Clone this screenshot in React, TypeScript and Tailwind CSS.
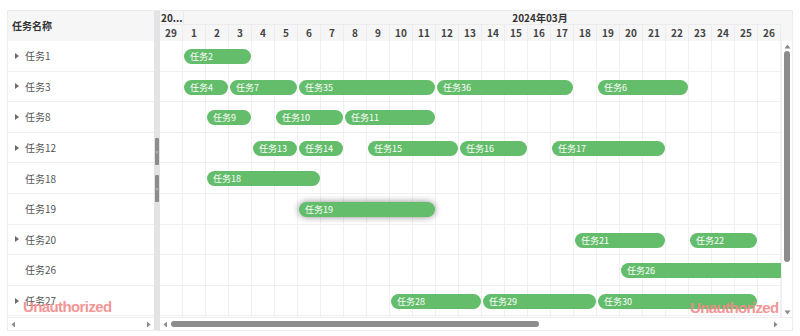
import React from "react";

type Bar = { name: string; start: number; span: number; selected?: boolean };
type Row = { name: string; caret: boolean; bars: Bar[] };

const rows: Row[] = [
  { name: "任务1", caret: true, bars: [{ name: "任务2", start: 1, span: 3 }] },
  {
    name: "任务3",
    caret: true,
    bars: [
      { name: "任务4", start: 1, span: 2 },
      { name: "任务7", start: 3, span: 3 },
      { name: "任务35", start: 6, span: 6 },
      { name: "任务36", start: 12, span: 6 },
      { name: "任务6", start: 19, span: 4 },
    ],
  },
  {
    name: "任务8",
    caret: true,
    bars: [
      { name: "任务9", start: 2, span: 2 },
      { name: "任务10", start: 5, span: 3 },
      { name: "任务11", start: 8, span: 4 },
    ],
  },
  {
    name: "任务12",
    caret: true,
    bars: [
      { name: "任务13", start: 4, span: 2 },
      { name: "任务14", start: 6, span: 2 },
      { name: "任务15", start: 9, span: 4 },
      { name: "任务16", start: 13, span: 3 },
      { name: "任务17", start: 17, span: 5 },
    ],
  },
  { name: "任务18", caret: false, bars: [{ name: "任务18", start: 2, span: 5 }] },
  { name: "任务19", caret: false, bars: [{ name: "任务19", start: 6, span: 6, selected: true }] },
  {
    name: "任务20",
    caret: true,
    bars: [
      { name: "任务21", start: 18, span: 4 },
      { name: "任务22", start: 23, span: 3 },
    ],
  },
  { name: "任务26", caret: false, bars: [{ name: "任务26", start: 20, span: 9 }] },
  {
    name: "任务27",
    caret: true,
    bars: [
      { name: "任务28", start: 10, span: 4 },
      { name: "任务29", start: 14, span: 5 },
      { name: "任务30", start: 19, span: 7 },
    ],
  },
];

const days = [29, ...Array.from({ length: 26 }, (_, i) => i + 1)];
const COL = 23;

const Caret = () => (
  <svg width="6" height="8" viewBox="0 0 6 8" className="shrink-0">
    <path d="M1 1 L5 4 L1 7 Z" fill="#6b6b6b" />
  </svg>
);

export default function App() {
  return (
    <div
      className="w-[800px] h-[336px] bg-white pt-[10px] pl-[7px] relative overflow-hidden"
      style={{ fontFamily: '"Noto Sans CJK SC", "Noto Sans", sans-serif' }}
    >
      <div className="w-[786px] h-[321px] border border-[#ececee] flex overflow-hidden">
        {/* Left panel */}
        <div className="w-[146px] flex flex-col shrink-0">
          <div className="h-[30px] bg-[#f6f6f7] flex items-center pl-[4px] pb-[2px] text-[10px] font-bold text-[#333] shrink-0">
            任务名称
          </div>
          <div className="flex-1 overflow-hidden">
            {rows.map((r) => (
              <div
                key={r.name}
                className="h-[30.6px] border-b border-[#efeff1] flex items-center pl-[6px] gap-[5px] text-[10px] text-[#555]"
              >
                {r.caret ? <Caret /> : <span className="w-[6px] shrink-0" />}
                <span>{r.name}</span>
              </div>
            ))}
          </div>
          <div className="h-[13px] shrink-0 border-t border-[#efeff1] flex items-center justify-between px-[3px] bg-white">
            <svg width="5" height="7" viewBox="0 0 5 7">
              <path d="M4 0.5 L0.5 3.5 L4 6.5 Z" fill="#8a8a8a" />
            </svg>
            <svg width="5" height="7" viewBox="0 0 5 7">
              <path d="M1 0.5 L4.5 3.5 L1 6.5 Z" fill="#8a8a8a" />
            </svg>
          </div>
        </div>

        {/* Splitter */}
        <div className="w-[6px] shrink-0 bg-[#e3e3e5] flex flex-col items-center pt-[127px] gap-[10px]">
          <div className="w-[4px] h-[27px] rounded-[1px] bg-[#8c8c8c] flex items-center justify-center text-[6px] leading-none text-white">
            ‹
          </div>
          <div className="w-[4px] h-[27px] rounded-[1px] bg-[#8c8c8c] flex items-center justify-center text-[6px] leading-none text-white">
            ›
          </div>
        </div>

        {/* Timeline */}
        <div className="flex-1 flex flex-col overflow-hidden">
          {/* Header */}
          <div className="h-[30px] bg-[#f6f6f7] flex shrink-0">
            <div className="w-[621px] overflow-hidden flex flex-col">
              <div className="h-[14px] flex border-b border-[#ececee] text-[10px] font-bold text-[#333] leading-[14px]">
                <div className="w-[23px] shrink-0 pl-[1px] whitespace-nowrap overflow-hidden">20...</div>
                <div className="w-[713px] shrink-0 text-center border-l border-[#e8e8ea]">2024年03月</div>
              </div>
              <div className="h-[16px] flex text-[10px] font-semibold text-[#444] leading-[16px]">
                {days.map((d, i) => (
                  <div
                    key={i}
                    className="w-[23px] shrink-0 text-center border-r border-[#ececee]"
                  >
                    {d}
                  </div>
                ))}
              </div>
            </div>
            <div className="flex-1" />
          </div>

          {/* Body */}
          <div className="flex-1 flex overflow-hidden">
            <div className="w-[621px] overflow-hidden bg-[linear-gradient(to_right,transparent_22px,#f0f0f2_22px)] bg-[length:23px_100%]">
              {rows.map((r) => (
                <div key={r.name} className="h-[30.6px] border-b border-[#efeff1] relative">
                  {r.bars.map((b) => (
                    <div
                      key={b.name}
                      className={
                        "absolute top-[8px] h-[15px] rounded-full bg-[#64bd6b] text-white text-[9px] leading-[15px] pl-[6px] whitespace-nowrap overflow-hidden" +
                        (b.selected ? " shadow-[0_0_7px_rgba(0,0,0,0.45)]" : "")
                      }
                      style={{ left: b.start * COL + 1, width: b.span * COL - 2 }}
                    >
                      {b.name}
                    </div>
                  ))}
                </div>
              ))}
            </div>
            {/* Vertical scrollbar */}
            <div className="flex-1 border-l border-[#efeff1] flex flex-col items-center pt-[3px] pb-[2px]">
              <svg width="7" height="5" viewBox="0 0 7 5">
                <path d="M0.5 4.5 L3.5 0.5 L6.5 4.5 Z" fill="#8a8a8a" />
              </svg>
              <div className="w-[6px] h-[211px] mt-[2px] rounded-full bg-[#8c8c8c]" />
              <div className="flex-1" />
              <svg width="7" height="5" viewBox="0 0 7 5">
                <path d="M0.5 0.5 L6.5 0.5 L3.5 4.5 Z" fill="#8a8a8a" />
              </svg>
            </div>
          </div>

          {/* Horizontal scrollbar */}
          <div className="h-[13px] shrink-0 border-t border-[#efeff1] flex">
            <div className="w-[621px] flex items-center px-[3px] gap-[3px]">
              <svg width="5" height="7" viewBox="0 0 5 7" className="shrink-0">
                <path d="M4 0.5 L0.5 3.5 L4 6.5 Z" fill="#8a8a8a" />
              </svg>
              <div className="w-[368px] h-[6px] rounded-full bg-[#8c8c8c]" />
              <div className="flex-1" />
              <svg width="5" height="7" viewBox="0 0 5 7" className="shrink-0">
                <path d="M1 0.5 L4.5 3.5 L1 6.5 Z" fill="#8a8a8a" />
              </svg>
            </div>
            <div className="flex-1" />
          </div>
        </div>
      </div>

      {/* Watermarks */}
      <div
        className="absolute left-[23px] top-[296px] text-[15px] font-bold text-[#f28b8b] opacity-90 pointer-events-none tracking-[-0.6px]"
        style={{ fontFamily: '"Liberation Sans", sans-serif' }}
      >
        Unauthorized
      </div>
      <div
        className="absolute left-[690px] top-[297px] text-[15px] font-bold text-[#f28b8b] opacity-90 pointer-events-none tracking-[-0.6px]"
        style={{ fontFamily: '"Liberation Sans", sans-serif' }}
      >
        Unauthorized
      </div>
    </div>
  );
}
